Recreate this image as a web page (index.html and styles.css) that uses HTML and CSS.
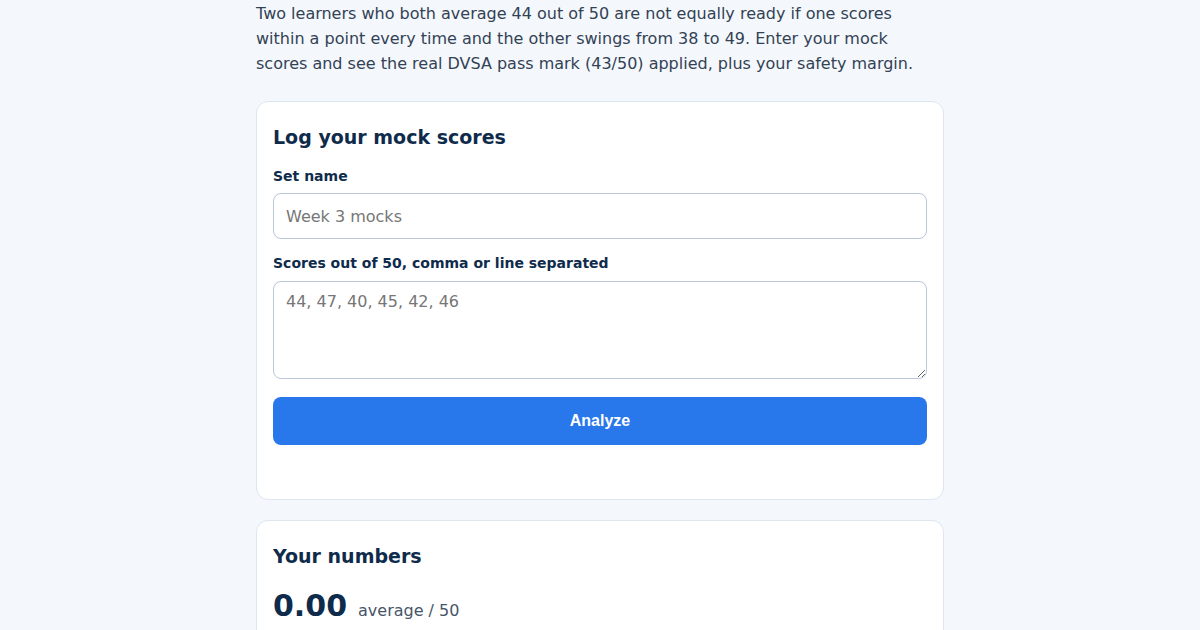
FILE: index.html
```html
<!DOCTYPE html>
<html lang="en">
<head>
<meta charset="utf-8">
<title>Mock score consistency</title>
<link rel="stylesheet" href="styles.css">
</head>
<body>
<main class="page">
  <p class="intro">Two learners who both average 44 out of 50 are not equally ready if one scores within a point every time and the other swings from 38 to 49. Enter your mock scores and see the real DVSA pass mark (43/50) applied, plus your safety margin.</p>

  <section class="card">
    <h2 class="card-title">Log your mock scores</h2>
    <label class="field-label" for="setname">Set name</label>
    <input class="text-input" id="setname" type="text" placeholder="Week 3 mocks">
    <label class="field-label second" for="scores">Scores out of 50, comma or line separated</label>
    <textarea class="text-area" id="scores" placeholder="44, 47, 40, 45, 42, 46"></textarea>
    <button class="primary-btn" type="button">Analyze</button>
    <div class="status"></div>
  </section>

  <section class="card">
    <h2 class="card-title">Your numbers</h2>
    <div class="stat">
      <span class="stat-value">0.00</span>
      <span class="stat-unit">average / 50</span>
    </div>
  </section>
</main>
</body>
</html>
```

FILE: styles.css
```css
* { box-sizing: border-box; }
html, body {
  margin: 0;
  padding: 0;
  background: #f4f8fc;
}
body {
  font-family: "DejaVu Sans", sans-serif;
  color: #334155;
}
.page {
  width: 688px;
  margin: 0 auto;
  padding-top: 1px;
  display: flex;
  flex-direction: column;
  gap: 20px;
}
.intro {
  margin: 0 0 5px;
  font-size: 16px;
  line-height: 25px;
  color: #334155;
}
.card {
  background: #ffffff;
  border: 1px solid #dde6f1;
  border-radius: 12px;
  padding: 16px 16px 16px;
  display: flex;
  flex-direction: column;
}
.card-title {
  margin: 6px 0 16px;
  font-size: 19px;
  line-height: 26px;
  font-weight: bold;
  color: #0f2b4c;
}
.field-label {
  font-size: 14px;
  line-height: 20px;
  font-weight: bold;
  color: #0f2b4c;
  margin-bottom: 7px;
}
.field-label.second { margin-top: 14px; margin-bottom: 8px; }
.text-input,
.text-area {
  width: 100%;
  font-family: "DejaVu Sans", sans-serif;
  font-size: 16px;
  color: #334155;
  background: #ffffff;
  border: 1px solid #b9c6dc;
  border-radius: 8px;
  padding: 0 12px;
  margin: 0;
}
.text-input { height: 46px; }
.text-area {
  height: 98px;
  padding: 10px 12px;
  line-height: 20px;
  resize: vertical;
}
.text-input::placeholder,
.text-area::placeholder { color: #767676; }
.primary-btn {
  margin-top: 18px;
  height: 48px;
  width: 100%;
  border: 0;
  border-radius: 8px;
  background: #2878ec;
  color: #ffffff;
  font-family: "Liberation Sans", Arial, sans-serif;
  font-size: 16px;
  font-weight: bold;
}
.status { height: 38px; }
.stat {
  display: flex;
  align-items: baseline;
  gap: 11px;
  margin-top: 1px;
}
.stat-value {
  font-size: 30px;
  line-height: 40px;
  font-weight: bold;
  color: #0f2b4c;
}
.stat-unit {
  font-size: 16px;
  color: #475569;
}
```
